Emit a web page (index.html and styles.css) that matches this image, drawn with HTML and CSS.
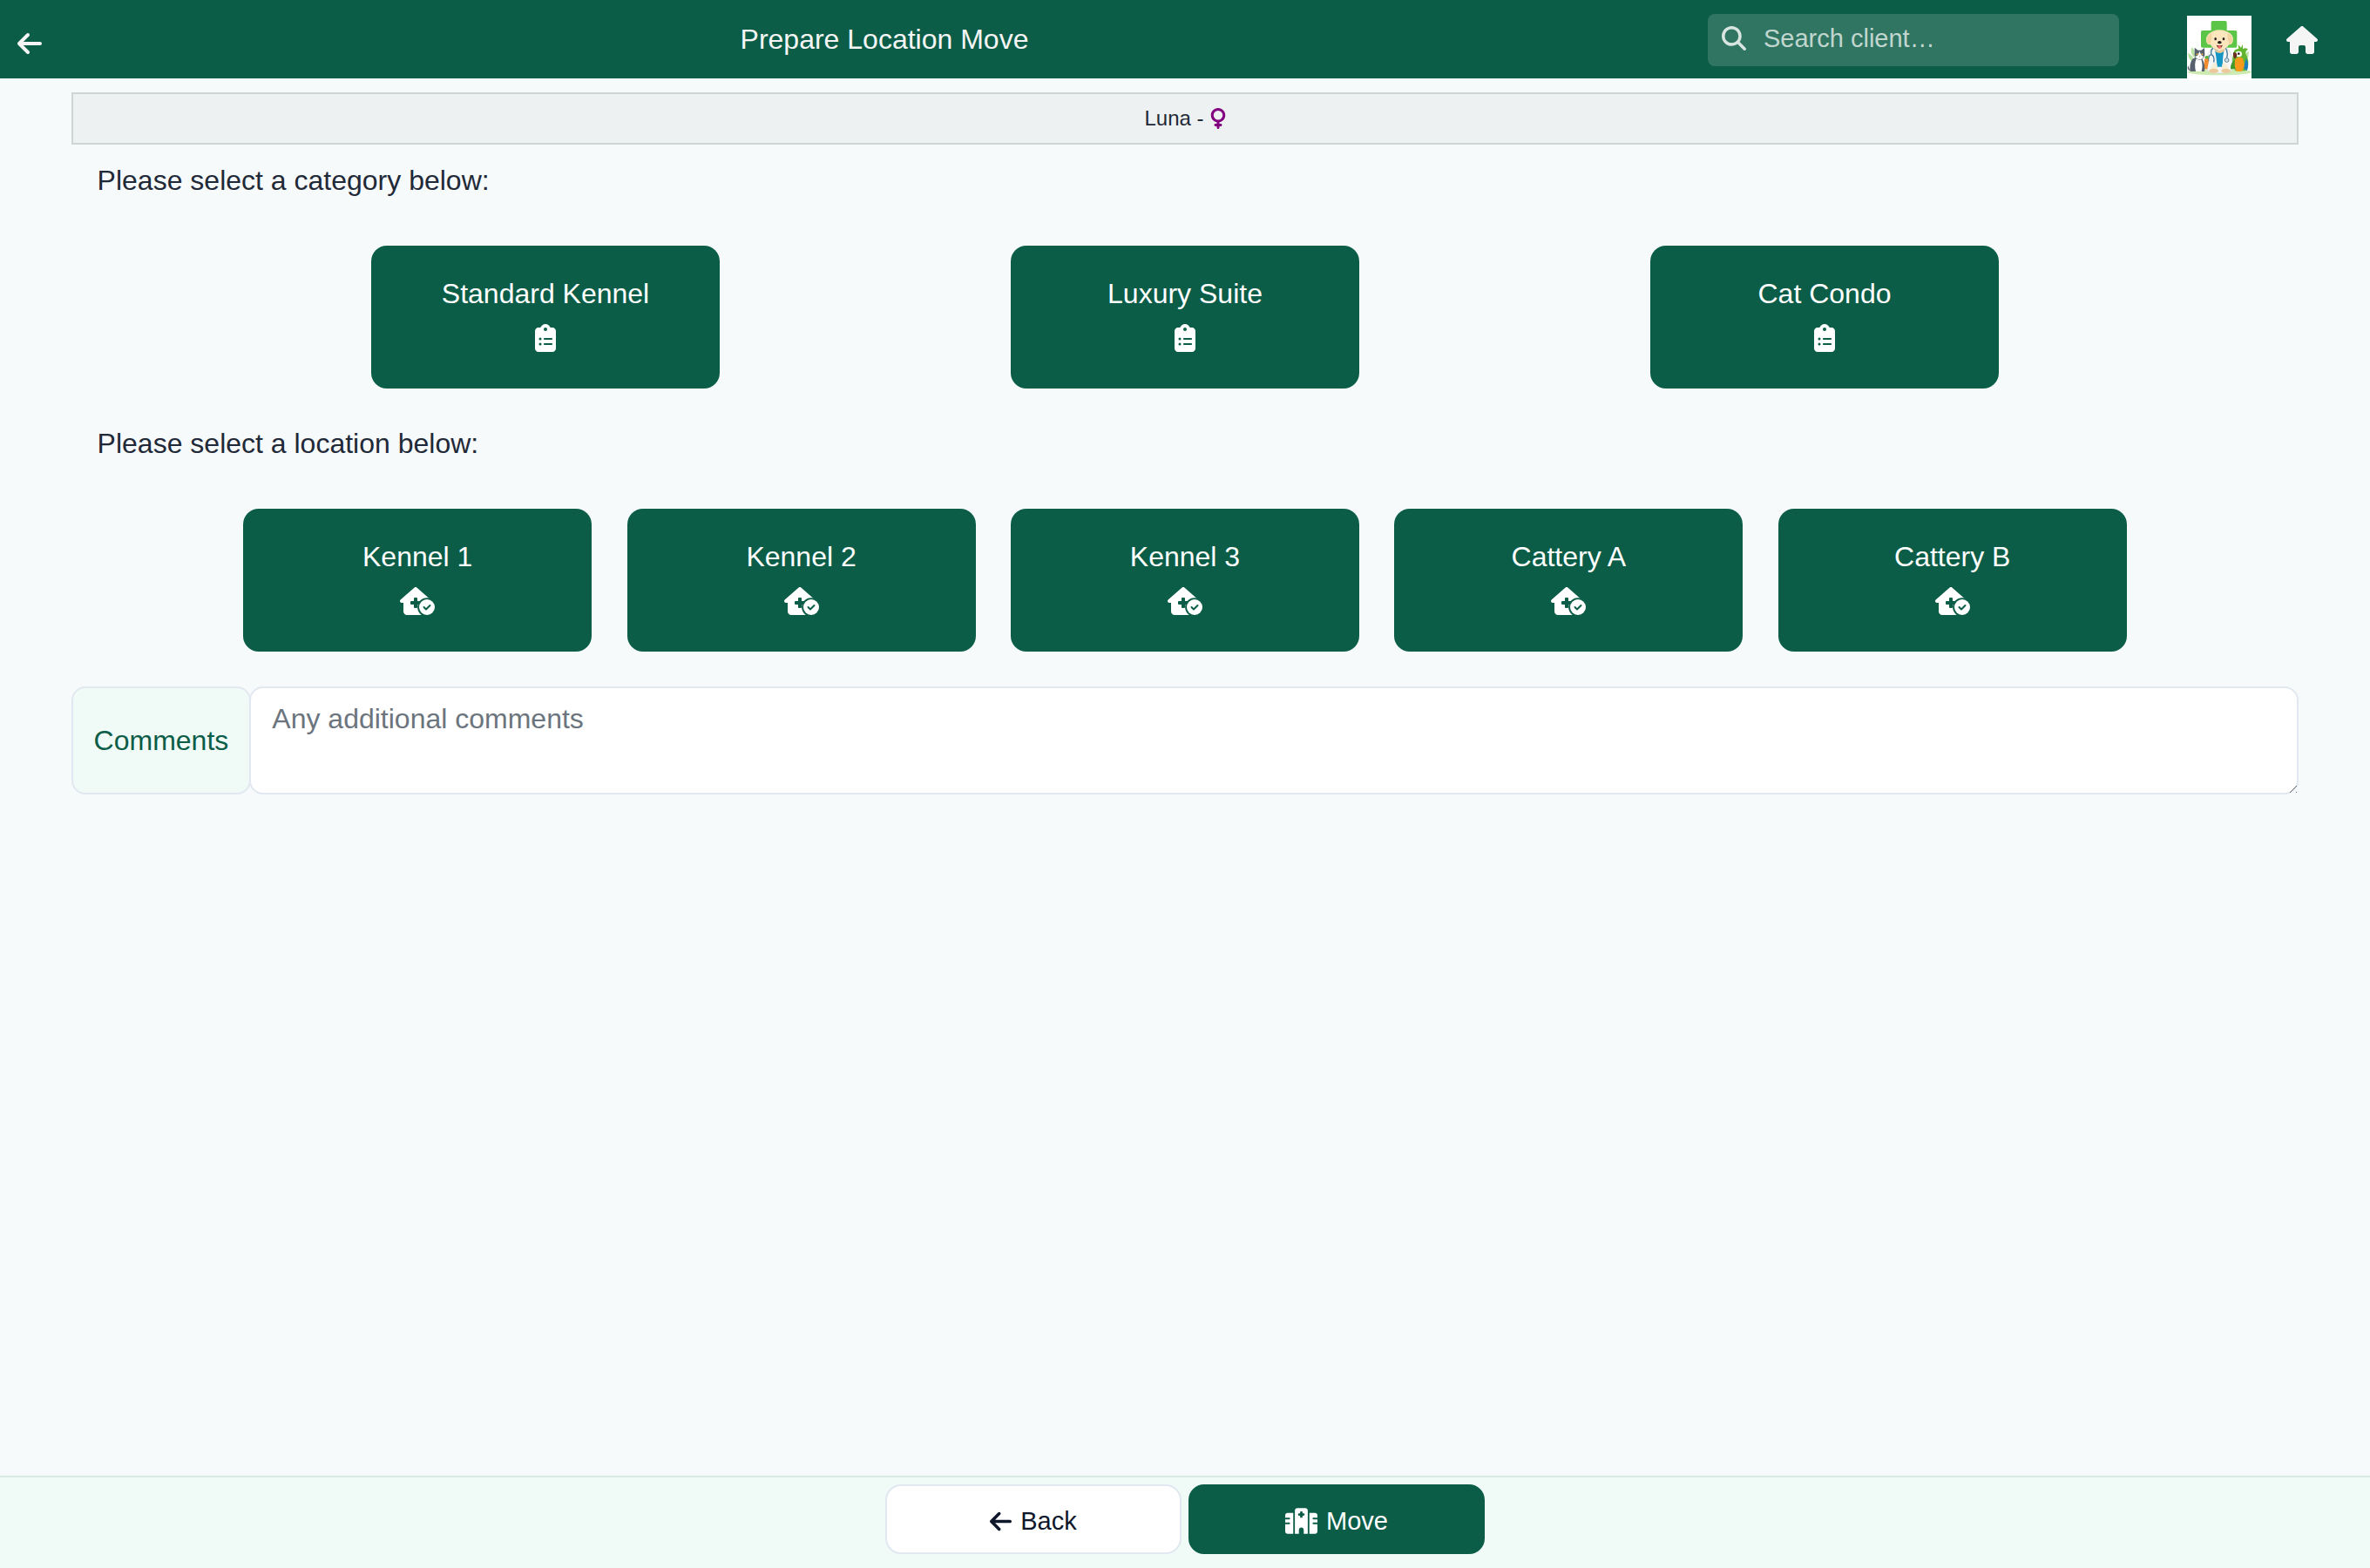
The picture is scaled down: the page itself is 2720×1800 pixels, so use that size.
FILE: index.html
```
<!DOCTYPE html>
<html lang="en">
<head>
    <meta charset="UTF-8">
    <meta name="viewport" content="width=device-width, initial-scale=1">
    <title>Prepare Location Move</title>
    <link rel="stylesheet" href="styles.css">
</head>
<body>
    <!-- Shared icons -->
    <svg class="icon-defs" aria-hidden="true">
        <symbol id="icon-arrow-left" viewBox="0 0 448 512">
            <path d="M9.4 233.4c-12.5 12.5-12.5 32.8 0 45.3l160 160c12.5 12.5 32.8 12.5 45.3 0s12.5-32.8 0-45.3L109.2 288 416 288c17.7 0 32-14.3 32-32s-14.3-32-32-32l-306.7 0L214.6 118.6c12.5-12.5 12.5-32.8 0-45.3s-32.8-12.5-45.3 0l-160 160z"/>
        </symbol>
        <symbol id="icon-clipboard" viewBox="0 0 384 512">
            <path d="M192 0c-41.8 0-77.4 26.7-90.5 64L64 64C28.7 64 0 92.7 0 128L0 448c0 35.3 28.7 64 64 64l256 0c35.3 0 64-28.7 64-64l0-320c0-35.3-28.7-64-64-64l-37.5 0C269.4 26.7 233.8 0 192 0zm0 64a32 32 0 1 1 0 64 32 32 0 1 1 0-64zM72 272a24 24 0 1 1 48 0 24 24 0 1 1 -48 0zm104-16l128 0c8.8 0 16 7.2 16 16s-7.2 16-16 16l-128 0c-8.8 0-16-7.2-16-16s7.2-16 16-16zM72 368a24 24 0 1 1 48 0 24 24 0 1 1 -48 0zm88 0c0-8.8 7.2-16 16-16l128 0c8.8 0 16 7.2 16 16s-7.2 16-16 16l-128 0c-8.8 0-16-7.2-16-16z"/>
        </symbol>
        <symbol id="icon-house-check" viewBox="0 0 640 512">
            <path d="M64 288H32c-18 0-32-14-32-32.100 0-9 3-17 10-24L266.400 8c7-7 15-8 22-8s15 2 21 7L564.800 231.500c8 7 12 15 11 24c0 18-15 32.100-32 32.100h-32V448c0 35-29 64-64 64H128c-35 0-64-29-64-64z"/>
            <path class="cut" d="M272 192h32q16 0 16 16v48h48q16 0 16 16v32q0 16-16 16h-48v48q0 16-16 16h-32q-16 0-16-16v-48h-48q-16 0-16-16v-32q0-16 16-16h48v-48q0-16 16-16z"/>
            <circle class="cut" cx="496" cy="368" r="174"/>
            <circle cx="496" cy="368" r="144"/>
            <path class="cut-line" d="M440 368l40 40 72-72"/>
        </symbol>
    </svg>

    <!-- Top bar -->
    <header class="topbar">
        <a class="topbar-back" href="#" aria-label="Go back">
            <svg class="icon icon-arrow"><use href="#icon-arrow-left"/></svg>
        </a>
        <h1>Prepare Location Move</h1>
        <div class="topbar-tools">
            <form class="search">
                <svg class="icon icon-search" viewBox="0 0 512 512">
                    <path d="M416 208c0 45.9-14.9 88.3-40 122.7L502.6 457.4c12.5 12.5 12.5 32.8 0 45.3s-32.8 12.5-45.3 0L330.7 376c-34.4 25.2-76.8 40-122.7 40C93.1 416 0 322.9 0 208S93.1 0 208 0S416 93.1 416 208zM208 352a144 144 0 1 0 0-288 144 144 0 1 0 0 288z"/>
                </svg>
                <input type="text" aria-label="Search client" placeholder="Search client…">
            </form>
            <svg class="logo" viewBox="0 0 222 222" role="img" aria-label="Clinic logo">
                <rect width="222" height="222" fill="#fff"/>
                <ellipse cx="112" cy="194" rx="110" ry="11" fill="#cdeab0"/>
                <!-- leaves -->
                <path d="M22 160Q2 150 4 128Q22 138 25 160zM22 140Q8 125 18 108Q30 124 27 144zM196 150Q194 130 212 122Q214 144 202 158z" fill="#b9e3a0"/>
                <!-- cross -->
                <path d="M88 18h44q5 0 5 5v28h30q5 0 5 5v49q0 5-5 5H53q-5 0-5-5V56q0-5 5-5h30V23q0-5 5-5z" fill="#5ac546"/>
                <!-- dog -->
                <path d="M85 112Q66 124 70 190L86 198H142L154 188Q160 126 138 112z" fill="#f4f6f6" stroke="#cbd3d6" stroke-width="2"/>
                <path d="M95 112L112 124 129 112 124 140 122 176H104L100 140z" fill="#1497c4"/>
                <path d="M88 168Q78 180 82 196H104Q106 174 100 158zM136 168Q146 180 142 196H120Q118 174 124 158z" fill="#f7eed8"/>
                <ellipse cx="92" cy="190" rx="16" ry="8" fill="#ecc99a"/>
                <ellipse cx="134" cy="190" rx="16" ry="8" fill="#ecc99a"/>
                <path d="M92 112Q112 128 132 110L128 122Q112 136 97 122z" fill="#e8c795"/>
                <path d="M84 56Q112 42 141 56Q162 66 158 88Q154 102 145 99Q134 118 112 118T80 99Q68 102 66 86Q64 66 84 56z" fill="#fbe6bd"/>
                <path d="M84 60Q67 70 68 88Q71 102 80 96Q87 82 84 60zM141 60Q158 70 156 88Q153 102 145 96Q137 82 141 60z" fill="#f3d3a0"/>
                <ellipse cx="98" cy="80" rx="4" ry="5" fill="#2b2320"/>
                <ellipse cx="126" cy="80" rx="4" ry="5" fill="#2b2320"/>
                <ellipse cx="112" cy="92" rx="7" ry="5" fill="#241d1c"/>
                <path d="M101 101Q112 104 123 101Q119 112 112 112T101 101z" fill="#7a2f2c"/>
                <ellipse cx="112" cy="108" rx="6" ry="5" fill="#f0706c"/>
                <!-- stethoscope -->
                <path d="M90 112Q80 118 84 134M84 134Q72 136 74 158M84 134Q96 140 92 160M133 112Q142 124 137 146" fill="none" stroke="#3f7596" stroke-width="4"/>
                <circle cx="137" cy="153" r="7" fill="#cfe0e6" stroke="#5d8196" stroke-width="3"/>
                <!-- cat with the carrot -->
                <path d="M60 150Q76 138 74 162L70 184H60z" fill="#f28a2e"/>
                <path d="M62 148Q60 138 68 138T74 148z" fill="#5ab03c"/>
                <path d="M10 190Q-2 186 4 172M10 190Q8 150 28 144H48Q64 160 60 192H14z" fill="#56616d"/>
                <path d="M32 148H48Q56 170 50 192H30Q24 166 32 148z" fill="#fff"/>
                <path d="M26 136L26 110 38 119H49L60 111 61 136Q56 152 43 152T26 136z" fill="#56616d"/>
                <path d="M43 122L49 136 57 141Q52 151 43 151T29 141L38 136z" fill="#fff"/>
                <circle cx="35" cy="133" r="3" fill="#f1b53c"/>
                <circle cx="52" cy="133" r="3" fill="#f1b53c"/>
                <path d="M41 139h5l-2 4z" fill="#e0837e"/>
                <!-- parrot -->
                <path d="M160 132Q160 114 178 114L176 100 186 110 192 98 192 114Q204 108 210 116Q200 122 202 132Q214 150 210 176L202 190H166Q150 160 160 132z" fill="#62b52f"/>
                <path d="M204 146Q216 170 206 190L194 180z" fill="#1c7fbc"/>
                <path d="M150 184Q148 164 164 152L168 184z" fill="#3f9a2c"/>
                <path d="M166 150Q180 136 192 148Q204 176 188 192H170Q160 170 166 150z" fill="#f79a1c"/>
                <ellipse cx="178" cy="132" rx="11" ry="10" fill="#fff"/>
                <circle cx="178" cy="131" r="4" fill="#2a2522"/>
                <path d="M160 126Q172 126 172 136Q170 148 163 148Q156 136 160 126z" fill="#6e2d22"/>
            </svg>
            <a class="topbar-home" href="#" aria-label="Home">
                <svg class="icon icon-house" viewBox="0 0 576 512">
                    <path d="M575.8 255.5c0 18-15 32.1-32 32.1l-32 0 .7 160.2c0 2.7-.2 5.4-.5 8.1l0 16.2c0 22.1-17.9 40-40 40l-16 0c-1.1 0-2.2 0-3.3-.1c-1.4 .1-2.8 .1-4.2 .1L416 512l-24 0c-22.1 0-40-17.9-40-40l0-24 0-64c0-17.7-14.3-32-32-32l-64 0c-17.7 0-32 14.3-32 32l0 64 0 24c0 22.1-17.9 40-40 40l-24 0-31.9 0c-1.5 0-3-.1-4.5-.2c-1.2 .1-2.4 .2-3.6 .2l-16 0c-22.1 0-40-17.9-40-40l0-112c0-.9 0-1.9 .1-2.8l0-69.7-32 0c-18 0-32-14-32-32.1c0-9 3-17 10-24L266.4 8c7-7 15-8 22-8s15 2 21 7L564.8 231.5c8 7 12 15 11 24z"/>
                </svg>
            </a>
        </div>
    </header>

    <main>
        <!-- Patient -->
        <div class="patient">
            <span>Luna -</span>
            <svg class="icon icon-venus" viewBox="0 0 384 512" role="img" aria-label="Female">
                <path d="M80 176a112 112 0 1 1 224 0A112 112 0 1 1 80 176zM224 349.1c81.9-15 144-86.8 144-173.1C368 78.8 289.2 0 192 0S16 78.8 16 176c0 86.3 62.1 158.1 144 173.1l0 34.9-32 0c-17.7 0-32 14.3-32 32s14.3 32 32 32l32 0 0 32c0 17.7 14.3 32 32 32s32-14.3 32-32l0-32 32 0c17.7 0 32-14.3 32-32s-14.3-32-32-32l-32 0 0-34.9z"/>
            </svg>
        </div>

        <!-- Categories -->
        <section>
            <h2>Please select a category below:</h2>
            <div class="cards">
                <button type="button" class="card">
                    <span>Standard Kennel</span>
                    <svg class="icon icon-clipboard"><use href="#icon-clipboard"/></svg>
                </button>
                <button type="button" class="card">
                    <span>Luxury Suite</span>
                    <svg class="icon icon-clipboard"><use href="#icon-clipboard"/></svg>
                </button>
                <button type="button" class="card">
                    <span>Cat Condo</span>
                    <svg class="icon icon-clipboard"><use href="#icon-clipboard"/></svg>
                </button>
            </div>
        </section>

        <!-- Locations -->
        <section>
            <h2>Please select a location below:</h2>
            <div class="cards">
                <button type="button" class="card">
                    <span>Kennel 1</span>
                    <svg class="icon icon-house-check"><use href="#icon-house-check"/></svg>
                </button>
                <button type="button" class="card">
                    <span>Kennel 2</span>
                    <svg class="icon icon-house-check"><use href="#icon-house-check"/></svg>
                </button>
                <button type="button" class="card">
                    <span>Kennel 3</span>
                    <svg class="icon icon-house-check"><use href="#icon-house-check"/></svg>
                </button>
                <button type="button" class="card">
                    <span>Cattery A</span>
                    <svg class="icon icon-house-check"><use href="#icon-house-check"/></svg>
                </button>
                <button type="button" class="card">
                    <span>Cattery B</span>
                    <svg class="icon icon-house-check"><use href="#icon-house-check"/></svg>
                </button>
            </div>
        </section>

        <div class="comments">
            <label for="comments">Comments</label>
            <textarea id="comments" placeholder="Any additional comments"></textarea>
        </div>
    </main>

    <!-- Bottom actions -->
    <footer class="actions">
        <button type="button" class="back-btn">
            <svg class="icon icon-arrow-small"><use href="#icon-arrow-left"/></svg>
            Back
        </button>
        <button type="button" class="move-btn">
            <svg class="icon icon-hospital" viewBox="0 0 640 512">
                <path d="M192 48c0-26.500 21.500-48 48-48H400c26.500 0 48 21.500 48 48V512H368V432c0-26.500-21.500-48-48-48s-48 21.500-48 48v80H192V48zM48 96H160V512H48c-26.500 0-48-21.500-48-48V320H80c8.800 0 16-7.200 16-16s-7.200-16-16-16H0V224H80c8.800 0 16-7.200 16-16s-7.200-16-16-16H0V144c0-26.500 21.500-48 48-48zm544 0c26.500 0 48 21.500 48 48v48H560c-8.800 0-16 7.200-16 16s7.200 16 16 16h80v64H560c-8.800 0-16 7.200-16 16s7.200 16 16 16h80V464c0 26.500-21.500 48-48 48H480V96H592zM312 64c-8.800 0-16 7.200-16 16v24H272c-8.800 0-16 7.200-16 16v16c0 8.800 7.200 16 16 16h24v24c0 8.800 7.200 16 16 16h16c8.800 0 16-7.200 16-16V152h24c8.800 0 16-7.200 16-16V120c0-8.800-7.200-16-16-16H344V80c0-8.800-7.200-16-16-16H312z"/>
            </svg>
            Move
        </button>
    </footer>
</body>
</html>
```

FILE: styles.css
```
* {
    box-sizing: border-box;
}

body {
    margin: 0;
    min-height: 100vh;
    display: flex;
    flex-direction: column;
    font-family: "Liberation Sans", Arial, sans-serif;
    font-size: 32px;
    line-height: 46px;
    color: #1f2937;
    background-color: #f6fafb;
}

button, input, textarea {
    font-family: inherit;
}

button {
    cursor: pointer;
}

/* Icons */
.icon-defs {
    position: absolute;
    width: 0;
    height: 0;
}

.icon {
    flex: none;
    fill: currentColor;
}

.icon-arrow {
    width: 28px;
    height: 32px;
}

.icon-arrow-small {
    width: 25px;
    height: 29px;
}

.icon-search {
    width: 28px;
    height: 28px;
}

.icon-house {
    width: 36px;
    height: 32px;
}

.icon-venus {
    width: 18px;
    height: 24px;
    color: #800080;
}

.icon-clipboard {
    width: 24px;
    height: 32px;
}

.icon-house-check {
    width: 40px;
    height: 32px;
}

.icon-hospital {
    width: 37px;
    height: 30px;
}

.cut {
    fill: #0b5d47;
}

.cut-line {
    fill: none;
    stroke: #0b5d47;
    stroke-width: 32px;
    stroke-linecap: round;
    stroke-linejoin: round;
}

/* Top bar */
.topbar {
    display: flex;
    align-items: center;
    height: 90px;
    color: #f5f5f5;
    background-color: #0b5d47;
}

.topbar a {
    display: flex;
    color: inherit;
}

.topbar .topbar-back {
    width: 70px;
    padding: 10px 0 0 20px;
}

.topbar .topbar-home {
    padding-top: 2px;
}

.topbar h1 {
    flex: 1;
    margin: 0;
    font-size: 32px;
    font-weight: normal;
    text-align: center;
}

.topbar-tools {
    display: flex;
    align-items: center;
    align-self: stretch;
    padding-right: 60px;
}

.search {
    display: flex;
    align-items: center;
    align-self: flex-start;
    gap: 20px;
    width: 472px;
    height: 60px;
    margin: 16px 78px 0 0;
    padding: 0 16px 4px;
    border-radius: 8px;
    color: #d8e5e1;
    background-color: rgba(255, 255, 255, 0.15);
}

.search input {
    flex: 1;
    min-width: 0;
    padding: 0;
    border: none;
    outline: none;
    font-size: 29px;
    color: #fff;
    background: none;
}

.search input::placeholder {
    color: #c1d6cf;
}

.logo {
    align-self: flex-start;
    width: 74px;
    height: 74px;
    margin: 18px 40px 0 0;
}

/* Content */
main {
    flex: 1;
    padding: 16px 3% 40px;
}

.patient {
    display: flex;
    align-items: center;
    justify-content: center;
    gap: 7px;
    height: 60px;
    margin-bottom: 18px;
    border: 2px solid #cfd4d5;
    font-size: 24px;
    background-color: #edf1f2;
}

section {
    margin-bottom: 40px;
}

h2 {
    margin: 0 0 52px;
    padding-left: 30px;
    font-size: 32px;
    font-weight: normal;
}

.cards {
    display: flex;
    justify-content: space-around;
    max-width: 2202px;
    margin: 0 auto;
}

.card {
    display: flex;
    flex-direction: column;
    align-items: center;
    gap: 12px;
    width: 400px;
    padding: 32px 20px 42px;
    border: none;
    border-radius: 18px;
    font-size: 32px;
    line-height: 46px;
    color: #fff;
    background-color: #0b5d47;
}

/* Comments */
.comments {
    display: flex;
}

.comments label {
    display: flex;
    align-items: center;
    padding: 0 24px;
    border: 2px solid #e2e8f0;
    border-radius: 16px;
    color: #0b5d47;
    background-color: #f0faf7;
}

.comments textarea {
    flex: 1;
    height: 124px;
    margin-left: -2px;
    padding: 12px 24px;
    border: 2px solid #e2e8f0;
    border-radius: 16px;
    font-size: 32px;
    line-height: 46px;
    color: #1f2937;
    background-color: #fff;
    resize: vertical;
}

.comments textarea::placeholder {
    color: #6c757d;
}

/* Larger resize handle */
.comments textarea::-webkit-scrollbar {
    width: 20px;
    height: 20px;
}

.comments textarea::-webkit-resizer {
    background: linear-gradient(135deg, transparent 47%, #666 47%, #666 53%, transparent 53%, transparent 73%, #666 73%, #666 79%, transparent 79%) 3px 4px / 15px 15px no-repeat;
}

/* Bottom actions */
.actions {
    display: flex;
    justify-content: center;
    gap: 8px;
    padding: 8px 0 16px;
    border-top: 2px solid #d8ebe3;
    background-color: #f0faf7;
}

.actions button {
    display: flex;
    align-items: center;
    justify-content: center;
    gap: 10px;
    width: 340px;
    height: 80px;
    padding: 4px 0 0;
    border: 2px solid #e2e8f0;
    border-radius: 18px;
    font-size: 29px;
}

.actions .back-btn {
    color: #0f172a;
    background-color: #fff;
}

.actions .move-btn {
    border-color: #0b5d47;
    color: #fff;
    background-color: #0b5d47;
}
```
